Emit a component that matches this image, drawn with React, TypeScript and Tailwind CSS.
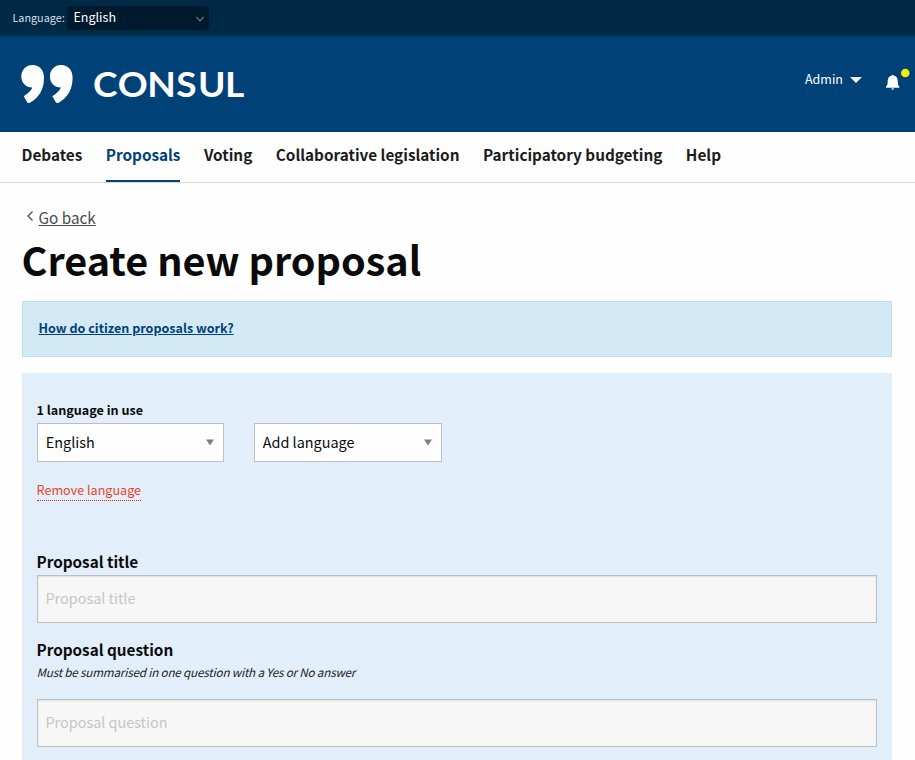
import React from "react";

function Caret({ className }: { className: string }) {
  return (
    <svg className={className} viewBox="0 0 8 7" width="8" height="7">
      <path d="M0 .5h8L4 6.500z" fill="#808080" />
    </svg>
  );
}

function Select({ label, width }: { label: string; width: string }) {
  return (
    <div className={`flex h-[39px] items-start justify-between border border-[#bfbfbf] bg-[#fefefe] pl-[7.800px] pr-[9px] text-[14.4px] leading-[35px] text-[#0a0a0a] ${width}`}>
      <span>{label}</span>
      <Caret className="mt-[15px]" />
    </div>
  );
}

function Field({ placeholder }: { placeholder: string }) {
  return (
    <input
      className="block h-12 w-full rounded-none border border-[#bfbfbf] bg-[#f7f7f7] pb-[3px] pl-[7.500px] pr-2 text-[14.400px] shadow-[inset_0_1px_2px_rgba(10,10,10,0.1)] placeholder:text-[#c6c6c6] outline-none"
      placeholder={placeholder}
    />
  );
}

const tabs = ["Debates", "Proposals", "Voting", "Collaborative legislation", "Participatory budgeting", "Help"];

export default function App() {
  return (
    <div className="h-[760px] w-[915px] overflow-hidden bg-[#fefefe] font-['Noto_Sans_CJK_SC',sans-serif] text-[#0a0a0a]">
      <div className="flex h-9 bg-[#002946] pl-[12.500px] text-white">
        <span className="w-[54.500px] text-[10.8px] leading-[34px] text-[#d8dfe4]">Language:</span>
        <div className="mt-1.5 flex h-6 w-[142px] items-start justify-between rounded bg-[#001a2d] pl-[6.500px] pr-[5px] text-[12.5px] leading-[22px]">
          <span>English</span>
          <svg className="mt-[10px]" width="8" height="6" viewBox="0 0 8 6" fill="none" stroke="#75818a" strokeWidth="1.2">
            <path d="M.3.8 4 4.800 7.700.8" />
          </svg>
        </div>
      </div>
      <header className="flex h-24 justify-between bg-[#004278] text-white">
        <svg width="260" height="96" viewBox="0 0 260 96" fill="#fff" className="shrink-0">
          <path id="quote" d="M21.300 40.500C21.300 34 26 29.100 32.500 29.100C39.500 29.100 44 34 44 42C44 54 38.500 62 29.500 67L27.500 66.800L23.700 60.300C28.500 57 31.200 54.500 32.300 51.500C25.800 51.500 21.300 46.800 21.300 40.500Z" />
          <use href="#quote" x="28.600" />
          <text transform="translate(93 61) scale(1.06 1)" x="0 23.300 51.200 78.600 99 124.600" y="0" fontFamily="Lato" fontWeight="700" fontSize="35">CONSUL</text>
        </svg>
        <div className="flex pr-[5px] pt-[31px]">
          <span className="text-[12.5px] leading-6">Admin</span>
          <svg className="ml-[7px] mt-[10px]" width="12" height="6" viewBox="0 0 12 6" fill="#fff"><path d="M0 0h12L6 6z" /></svg>
          <svg className="ml-6" width="24" height="26" viewBox="0 0 24 26" fill="#fff">
            <path d="M5.800 8.500Q6.700 7.200 7.600 8.500C10.600 9.100 11.800 11.200 11.800 14.500C11.800 17.400 12.200 18.500 13.300 19.600V20.800H0V19.600C1.200 18.500 1.700 17.400 1.700 14.500C1.700 11.200 2.800 9.100 5.800 8.500ZM5 21.500H8.400Q6.700 24.200 5 21.500Z" />
            <circle cx="19.300" cy="6" r="4.300" fill="#ecee0a" />
          </svg>
        </div>
      </header>
      <nav className="flex h-[51px] gap-[23.500px] border-b border-[#d8d8d8] pl-[21.500px] text-[15.3px] font-bold leading-[45px] text-[#1b1b1b]">
        {tabs.map((tab) => (
          <a key={tab} className={tab === "Proposals" ? "h-[50px] border-b-2 border-[#004278] text-[#004278]" : "h-[50px]"}>{tab}</a>
        ))}
      </nav>
      <main className="pl-[22px] pr-[23px]">
        <div className="flex h-[54px] pl-[5px] pt-[22px] text-[15.300px] leading-6 text-[#4c4c4c]">
          <svg className="mr-[4.500px] mt-[5px]" width="7" height="12" viewBox="0 0 7 12" fill="none" stroke="currentColor" strokeWidth="1.300"><path d="M5.500 1.500 1 6 5.500 10.500" /></svg>
          <a className="underline">Go back</a>
        </div>
        <h1 className="mb-2 -ml-[0.500px] h-14 whitespace-nowrap text-[39.600px] font-bold leading-[43px]">Create new proposal</h1>
        <div className="h-14 border border-[#b5e2eb] bg-[#d3e9f6] pl-[15.500px] text-[12.550px] font-bold leading-[52px] text-[#004278]">
          <a className="underline">How do citizen proposals work?</a>
        </div>
        <section className="mt-4 h-[390px] bg-[#e2effb] px-[15px] pt-[26px]">
          <div className="-ml-[0.500px] h-6 text-[12.600px] font-bold leading-[22px]">1 language in use</div>
          <div className="flex gap-[30px]">
            <Select label="English" width="w-[187px]" />
            <Select label="Add language" width="w-[188px]" />
          </div>
          <div className="flex h-[88px] items-start pt-[18px]">
            <a className="-ml-[0.400px] block h-[21px] border-b border-dotted border-[#d02c1c] text-[12.600px] leading-[20px] text-[#f04124]">Remove language</a>
          </div>
          <div className="-ml-[0.500px] h-[25px] text-[15.300px] font-bold leading-[23px]">Proposal title</div>
          <Field placeholder="Proposal title" />
          <div className="-ml-[0.500px] mt-[15px] h-[25px] text-[15.300px] font-bold leading-[23px]">Proposal question</div>
          <p className="mb-[16px] -ml-[0.500px] h-5 whitespace-nowrap text-[11.700px] italic leading-[18px] tracking-[-0.200px] text-[#222]">Must be summarised in one question with a Yes or No answer</p>
          <Field placeholder="Proposal question" />
        </section>
      </main>
    </div>
  );
}
